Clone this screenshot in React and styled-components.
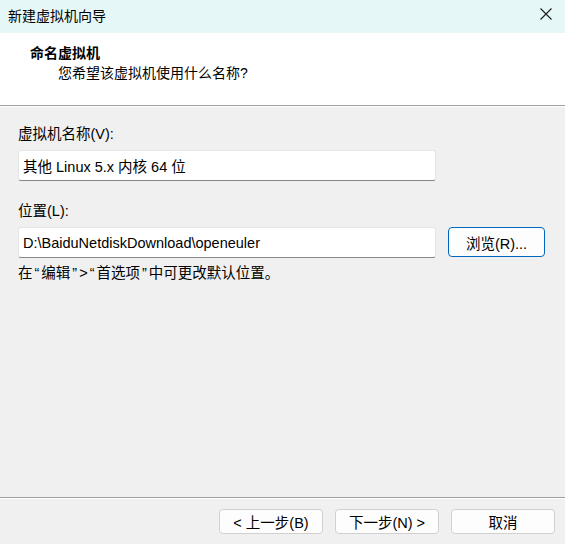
import React from 'react';
import styled, { createGlobalStyle } from 'styled-components';

const GlobalStyle = createGlobalStyle`
  html, body {
    margin: 0;
    padding: 0;
    background: #f0f0f0;
  }
  body {
    font-family: "Liberation Sans", "Noto Sans CJK SC", sans-serif;
    font-size: 14.5px;
    color: #000;
  }
`;

const App = () => {
  return (
    <>
      <GlobalStyle />
      <Window>
        <TitleBar>
          <TitleText>新建虚拟机向导</TitleText>
          <CloseButton aria-label="关闭">
            <svg width="12" height="12" viewBox="0 0 12 12">
              <path d="M0.5 0.5 L11.5 11.5 M11.5 0.5 L0.5 11.5" stroke="#1b1b1b" strokeWidth="1.1" fill="none" />
            </svg>
          </CloseButton>
        </TitleBar>

        <Header>
          <HeaderTitle>命名虚拟机</HeaderTitle>
          <HeaderSubtitle>您希望该虚拟机使用什么名称?</HeaderSubtitle>
        </Header>
        <Divider />

        <Content>
          <Label>虚拟机名称(V):</Label>
          <Field defaultValue="其他 Linux 5.x 内核 64 位" />

          <Label $spaced>位置(L):</Label>
          <FieldRow>
            <Field defaultValue="D:\BaiduNetdiskDownload\openeuler" />
            <Button $primary $width={97} $height={30}>浏览(R)...</Button>
          </FieldRow>
          <Hint>
            在<Quote>“</Quote>编辑<Quote>”</Quote>&gt;<Quote>“</Quote>首选项<Quote>”</Quote>中可更改默认位置。
          </Hint>
        </Content>

        <Divider />
        <Footer>
          <Button>&lt; 上一步(B)</Button>
          <Button>下一步(N) &gt;</Button>
          <Button>取消</Button>
        </Footer>
      </Window>
    </>
  );
};

export default App;

const Window = styled.div`
  width: 565px;
  height: 544px;
  display: flex;
  flex-direction: column;
  background: #f0f0f0;
  overflow: hidden;
`;

const TitleBar = styled.div`
  height: 33px;
  flex-shrink: 0;
  display: flex;
  align-items: center;
  justify-content: space-between;
  background: #e5f7f7;
  padding-left: 8px;
`;

const TitleText = styled.span`
  font-size: 14px;
  line-height: 20px;
  margin-top: -2px;
`;

const CloseButton = styled.div`
  width: 38px;
  height: 33px;
  display: flex;
  align-items: center;
  justify-content: center;
  margin-top: -5px;
`;

const Header = styled.div`
  height: 72px;
  flex-shrink: 0;
  background: #fff;
  padding: 10px 0 0 30px;
  box-sizing: border-box;
`;

const HeaderTitle = styled.div`
  font-weight: 700;
  font-size: 14px;
  line-height: 20px;
`;

const HeaderSubtitle = styled.div`
  margin-left: 28px;
  font-size: 14px;
  line-height: 20px;
`;

const Divider = styled.div`
  flex-shrink: 0;
  border-top: 1px solid #a0a0a0;
  border-bottom: 1px solid #fff;
`;

const Content = styled.div`
  flex: 1;
  padding: 17px 10px 0 18px;
  display: flex;
  flex-direction: column;
`;

const Label = styled.div`
  line-height: 20px;
  margin: ${p => (p.$spaced ? '20px' : '0')} 0 6px;
`;

const FieldRow = styled.div`
  display: flex;
  align-items: flex-start;
  gap: 12px;
`;

const Field = styled.input`
  width: 418px;
  height: 31px;
  box-sizing: border-box;
  border: 1px solid #e5e5e5;
  border-bottom: 1px solid #868686;
  border-radius: 3px;
  background: #fff;
  padding: 0 4px;
  font-family: inherit;
  font-size: 14.5px;
  color: #000;
  outline: none;
  flex-shrink: 0;
`;

const Hint = styled.div`
  line-height: 20px;
  margin-top: 5px;
`;

const Quote = styled.span`
  padding: 0 2px;
`;

const Footer = styled.div`
  display: flex;
  justify-content: flex-end;
  gap: 12px;
  padding: 10px 10px 10px 0;
`;

const Button = styled.div`
  width: ${p => p.$width || 104}px;
  height: ${p => p.$height || 25}px;
  box-sizing: border-box;
  display: flex;
  align-items: center;
  justify-content: center;
  background: #fdfdfd;
  border: 1px solid ${p => (p.$primary ? '#0067c0' : '#d0d0d0')};
  border-radius: 4px;
  font-size: 14.5px;
  color: #000;
  white-space: nowrap;
`;
